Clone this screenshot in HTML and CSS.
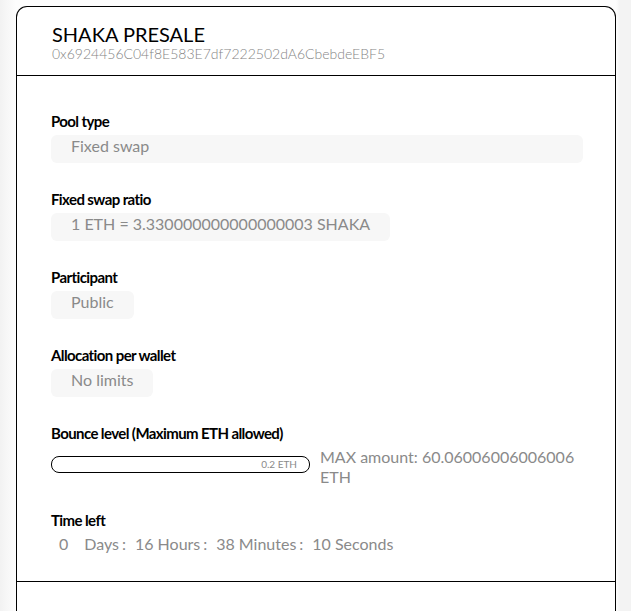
FILE: index.html
```html
<!DOCTYPE html>
<html lang="en">
<head>
    <meta charset="UTF-8">
    <meta name="viewport" content="width=device-width, initial-scale=1.0">
    <title>SHAKA PRESALE</title>
    <link rel="stylesheet" href="styles.css">
</head>
<body>
    <div class="card">
        <div class="card-head">
            <div class="title">SHAKA PRESALE</div>
            <div class="address">0x6924456C04f8E583E7df7222502dA6CbebdeEBF5</div>
        </div>
        <div class="card-body">
            <div class="field">
                <div class="label">Pool type</div>
                <div class="value wide">Fixed swap</div>
            </div>
            <div class="field">
                <div class="label">Fixed swap ratio</div>
                <div class="value">1 ETH = 3.330000000000000003 SHAKA</div>
            </div>
            <div class="field">
                <div class="label">Participant</div>
                <div class="value">Public</div>
            </div>
            <div class="field">
                <div class="label">Allocation per wallet</div>
                <div class="value">No limits</div>
            </div>
            <div class="field bounce-field">
                <div class="label">Bounce level (Maximum ETH allowed)</div>
                <div class="bounce">
                    <div class="bar"><span>0.2 ETH</span></div>
                    <div class="max">MAX amount: 60.06006006006006 ETH</div>
                </div>
            </div>
            <div class="field">
                <div class="label">Time left</div>
                <div class="timer">
                    <span class="num first">0</span><span class="unit">Days</span><span class="sep">:</span>
                    <span class="num">16</span><span class="unit">Hours</span><span class="sep">:</span>
                    <span class="num">38</span><span class="unit">Minutes</span><span class="sep">:</span>
                    <span class="num">10</span><span class="unit">Seconds</span>
                </div>
            </div>
        </div>
        <div class="card-foot"></div>
    </div>
</body>
</html>
```

FILE: styles.css
```css
body{
    margin: 0;
    padding: 6px 0 0 16px;
    background: linear-gradient(90deg, #f2f2f2 0px, #fdfdfd 16px, #fdfdfd 616px, #f3f3f3 620px);
    font-family: Lato, 'Open Sans', sans-serif;
    color: #000;
    overflow: hidden;
}
.card{
    width: 598px;
    height: 700px;
    background: #fff;
    border: 1px solid #000;
    border-bottom: none;
    border-radius: 11px 11px 0 0;
}
.card-head{
    height: 69px;
    box-sizing: border-box;
    padding: 15px 35px 0;
    border-bottom: 1px solid #000;
}
.card-head .title{
    font-size: 20px;
    line-height: 24px;
}
.card-head .address{
    font-size: 14px;
    line-height: 15px;
    font-weight: 300;
    color: #858585;
}
.card-body{
    padding: 36px 32px 27px 34px;
    border-bottom: 1px solid #000;
}
.field{
    margin-bottom: 27px;
}
.field:last-child{
    margin-bottom: 0;
}
.bounce-field{
    margin-bottom: 24px;
}
.label{
    font-size: 15px;
    font-weight: 700;
    letter-spacing: -0.6px;
    line-height: 18px;
    margin-bottom: 5px;
}
.value{
    display: inline-block;
    background: #f7f7f7;
    border-radius: 6px;
    padding: 0 20px;
    height: 28px;
    line-height: 22px;
    font-size: 16px;
    color: #8a8a8a;
}
.value.wide{
    display: block;
}
.bounce{
    display: flex;
    align-items: flex-start;
    gap: 10px;
}
.bar{
    width: 257px;
    height: 15px;
    flex-shrink: 0;
    border: 1.5px solid #000;
    border-radius: 8px;
    text-align: right;
    margin-top: 9px;
    font-size: 10px;
    line-height: 15px;
}
.bar span{
    color: #8a8a8a;
    padding-right: 12px;
}
.max{
    font-size: 16px;
    line-height: 20px;
    color: #8a8a8a;
    width: 263px;
}
.timer{
    display: flex;
    font-size: 16px;
    color: #8a8a8a;
    line-height: 20px;
    padding-left: 8px;
    margin-top: 4px;
}
.timer .num{
    margin-right: 4px;
}
.timer .num.first{
    margin-right: 16px;
}
.timer .unit{
    margin-right: 3px;
}
.timer .sep{
    margin-right: 9px;
}
```
